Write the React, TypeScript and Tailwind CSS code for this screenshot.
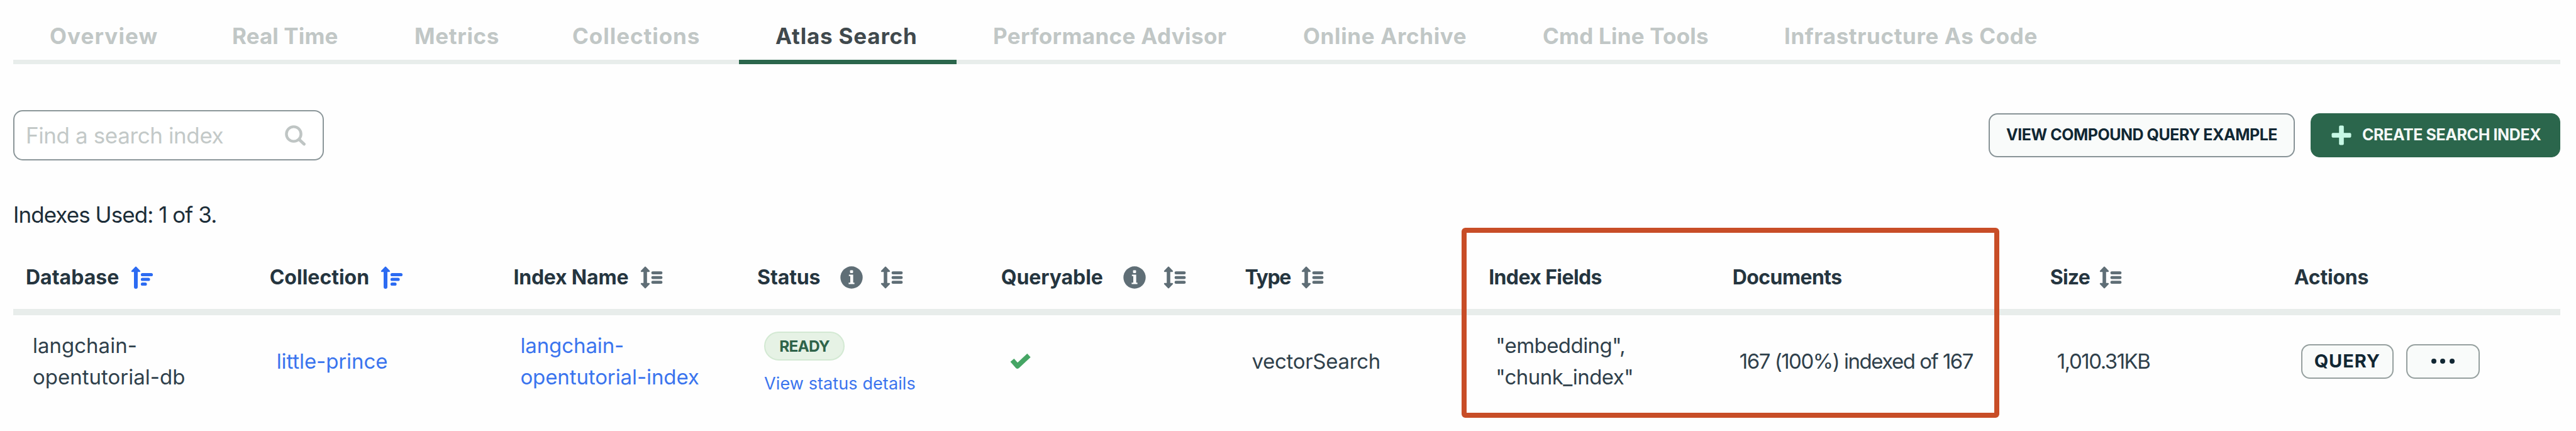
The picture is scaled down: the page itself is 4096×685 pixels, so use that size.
import type { ReactNode } from "react";

type Tab = { label: string; cls: string; active?: boolean };

const tabs: Tab[] = [
  { label: "Overview", cls: "w-[290px] tracking-[1.1px]" },
  { label: "Real Time", cls: "w-[290px] tracking-[0.1px]" },
  { label: "Metrics", cls: "w-[251px] tracking-[0.65px]" },
  { label: "Collections", cls: "w-[323px] tracking-[0.95px]" },
  { label: "Atlas Search", cls: "w-[346px] tracking-[0.8px]", active: true },
  { label: "Performance Advisor", cls: "w-[493px] tracking-[0.35px]" },
  { label: "Online Archive", cls: "w-[381px] tracking-[0.65px]" },
  { label: "Cmd Line Tools", cls: "w-[384px] tracking-[0.2px]" },
  { label: "Infrastructure As Code", cls: "w-[525px] tracking-[0.6px]" },
];

function SortAsc() {
  return (
    <svg className="h-[36px] w-[36px] shrink-0 text-[#2c6bf2]" viewBox="0 0 36 36" fill="none" stroke="currentColor" strokeLinecap="round">
      <path d="M8 8V33" strokeWidth="6" />
      <path d="M8 1.8L14 8H2Z" fill="currentColor" strokeWidth="2.4" strokeLinejoin="round" />
      <path d="M18.5 13.5H32.5M18.5 21H28M18.5 28.5H23" strokeWidth="5.2" />
    </svg>
  );
}

function SortBoth() {
  return (
    <svg className="h-[36px] w-[36px] shrink-0 text-[#5f6e76]" viewBox="0 0 36 36" fill="none" stroke="currentColor" strokeLinecap="round">
      <path d="M8 8V28" strokeWidth="5.6" />
      <path d="M8 1.8L14 8H2ZM8 34.2L14 28H2Z" fill="currentColor" strokeWidth="2.4" strokeLinejoin="round" />
      <path d="M20 10.7H33M20 18.2H33M20 25.7H33" strokeWidth="4.8" />
    </svg>
  );
}

function Info() {
  return (
    <svg className="h-[36px] w-[36px] shrink-0" viewBox="0 0 36 36">
      <circle cx="18" cy="18" r="17.7" fill="#5f6e76" />
      <rect x="15.6" y="6.6" width="4.8" height="4.4" rx="1" fill="#fff" />
      <path d="M13.8 13.4H20.6V26.3H22.6V28.6H13.4V26.3H16V15.8H13.8Z" fill="#fff" />
    </svg>
  );
}

function Head({ label, cls, children }: { label: string; cls?: string; children?: ReactNode }) {
  return (
    <div className="flex items-center">
      <span className={cls}>{label}</span>
      {children}
    </div>
  );
}

const COLS = "grid grid-cols-[387.7px_387.7px_387.7px_387.7px_387.7px_387.7px_387.7px_505px_388px_1fr]";

export default function App() {
  return (
    <div className="relative h-[685px] w-[4096px] overflow-hidden bg-[#fefefe] pr-[25px] pl-[21px] font-[Inter,sans-serif] whitespace-nowrap text-[#2f404b]">
      <nav className="flex h-[102px] border-b-[7px] border-[#e8edeb]">
        {tabs.map((t) => (
          <div
            key={t.label}
            className={`h-[102px] shrink-0 pt-[35px] pl-[58px] text-[35px] leading-[44px] font-bold ${t.cls} ${
              t.active ? "border-b-[7px] border-[#2b664c] text-[#40494d]" : "text-[#c1c7c6]"
            }`}
          >
            {t.label}
          </div>
        ))}
      </nav>

      <div className="mt-[73px] flex h-[80px] items-center">
        <div className="flex h-[80px] w-[494px] items-center rounded-[15px] border-[2.5px] border-[#8b9699] bg-white pl-[18px]">
          <span className="w-[412px] text-[35px] tracking-[-0.4px] text-[#c3c9c8]">Find a search index</span>
          <svg className="h-[33px] w-[34px]" viewBox="0 0 34 33" fill="none" stroke="#bfc5c4" strokeLinecap="round">
            <circle cx="14" cy="14" r="11.6" strokeWidth="4.4" />
            <path d="M23 23L30.5 30" strokeWidth="4.8" />
          </svg>
        </div>
        <button className="ml-auto flex h-[70px] w-[487px] items-center justify-center rounded-[14px] border-[2.5px] border-[#889397] bg-[#f9fbfa] text-[25px] font-bold tracking-[-0.5px] text-[#112733]">
          VIEW COMPOUND QUERY EXAMPLE
        </button>
        <button className="ml-[25px] flex h-[70px] w-[397px] items-center rounded-[14px] border-[1.5px] border-[#2b664c] bg-[#2b664c] pl-[32px] text-[25px] font-bold tracking-[-0.4px] text-[#f4f8f6]">
          <svg className="mr-[17px] h-[32px] w-[32px]" viewBox="0 0 32 32" fill="#c6f8e5">
            <rect x="12.2" y="0.5" width="7.6" height="31" rx="2" />
            <rect x="0.5" y="12.2" width="31" height="7.6" rx="2" />
          </svg>
          CREATE SEARCH INDEX
        </button>
      </div>

      <p className="mt-[64px] h-[45px] text-[35px] leading-[44px] tracking-[-0.95px] text-[#1c2d38]">Indexes Used: 1 of 3.</p>

      <div className={`${COLS} mt-[45px] h-[92px] border-b-[10px] border-[#e8edeb] pb-[18px] pl-[20px] text-[32px] font-bold text-[#25353f]`}>
        <Head label="Database" cls="w-[167px] tracking-[0px]"><SortAsc /></Head>
        <Head label="Collection" cls="w-[176px] tracking-[0px]"><SortAsc /></Head>
        <Head label="Index Name" cls="w-[202px] tracking-[-0.2px]"><SortBoth /></Head>
        <Head label="Status" cls="w-[132px] tracking-[-0.1px]"><Info /><span className="w-[28px]" /><SortBoth /></Head>
        <Head label="Queryable" cls="w-[194px] tracking-[-0.1px]"><Info /><span className="w-[28px]" /><SortBoth /></Head>
        <Head label="Type" cls="w-[90px] tracking-[-1.3px]"><SortBoth /></Head>
        <Head label="Index Fields" cls="tracking-[-0.6px]" />
        <Head label="Documents" cls="tracking-[-0.6px]" />
        <Head label="Size" cls="w-[78px] tracking-[-0.8px]"><SortBoth /></Head>
        <Head label="Actions" cls="tracking-[-0.2px]" />
      </div>

      <div className={`${COLS} h-[146px] items-center pl-[31px] text-[33px] leading-[50px]`}>
        <div>langchain-<br />opentutorial-db</div>
        <div className="tracking-[-0.1px] text-[#3a74ee]">little-prince</div>
        <div className="tracking-[-0.1px] text-[#3a74ee]">langchain-<br />opentutorial-index</div>
        <div className="mt-[14px]">
          <div className="flex h-[46px] w-[128px] items-center justify-center rounded-full border-[2.5px] border-[#d3e9d3] bg-[#e6f2e5] text-[24.5px] font-bold tracking-[-0.8px] text-[#2f6349]">READY</div>
          <div className="mt-[12px] text-[27px] leading-[50px] tracking-[0.1px] text-[#3a74ee]">View status details</div>
        </div>
        <div className="flex">
          <svg className="mt-[1px] ml-[3px] h-[26px] w-[34px]" viewBox="0 0 34 26" fill="none" stroke="#45a564" strokeLinecap="butt" strokeLinejoin="round">
            <path d="M3.5 10.5L11.8 19.8L30 2.8" strokeWidth="7.8" />
          </svg>
        </div>
        <div className="tracking-[-0.3px]">vectorSearch</div>
        <div className="tracking-[-0.55px]">"embedding",<br />"chunk_index"</div>
        <div className="tracking-[-1.5px]">167 (100%) indexed of 167</div>
        <div className="tracking-[-1.5px]">1,010.31KB</div>
        <div className="flex items-center gap-[20px]">
          <button className="flex h-[55px] w-[147px] items-center justify-center rounded-[14px] border-[2.5px] border-[#96a09f] bg-[#f9fbfa] text-[29px] font-bold tracking-[0.9px] text-[#112733]">QUERY</button>
          <button className="flex h-[55px] w-[117px] items-center justify-center gap-[6.5px] rounded-[14px] border-[2.5px] border-[#96a09f] bg-[#f9fbfa]">
            <span className="h-[8px] w-[8px] rounded-full bg-[#112733]" />
            <span className="h-[8px] w-[8px] rounded-full bg-[#112733]" />
            <span className="h-[8px] w-[8px] rounded-full bg-[#112733]" />
          </button>
        </div>
      </div>

      <div className="absolute top-[362px] left-[2324px] h-[302px] w-[855px] rounded-[6px] border-[8.5px] border-[#c84d27]" />
    </div>
  );
}
